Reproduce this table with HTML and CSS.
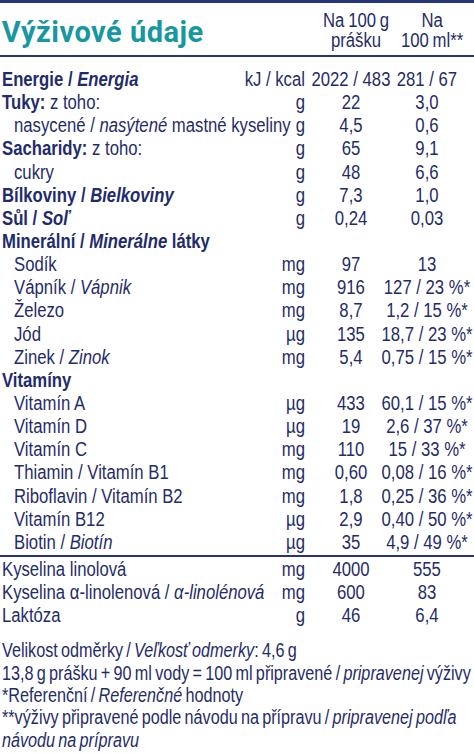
FILE: index.html
```html
<!DOCTYPE html>
<html lang="cs">
<head>
<meta charset="utf-8">
<title>Výživové údaje</title>
<link rel="stylesheet" href="styles.css">
</head>
<body>
<div class="page">
<div class="label">
  <header class="head">
    <h1 class="title">Výživové údaje</h1>
    <div class="hcol">Na 100 g<br>prášku</div>
    <div class="hcol">Na<br>100 ml**</div>
  </header>

  <section class="rows main">
    <div class="l b"><span>Energie / <i>Energia</i></span></div><div class="u"><span>kJ / kcal</span></div><div class="v"><span>2022 / 483</span></div><div class="v"><span>281 / 67</span></div>
    <div class="l"><span><b>Tuky:</b> z toho:</span></div><div class="u"><span>g</span></div><div class="v"><span>22</span></div><div class="v"><span>3,0</span></div>
    <div class="l in"><span>nasycené / <i>nasýtené</i> mastné kyseliny</span></div><div class="u"><span>g</span></div><div class="v"><span>4,5</span></div><div class="v"><span>0,6</span></div>
    <div class="l"><span><b>Sacharidy:</b> z toho:</span></div><div class="u"><span>g</span></div><div class="v"><span>65</span></div><div class="v"><span>9,1</span></div>
    <div class="l in"><span>cukry</span></div><div class="u"><span>g</span></div><div class="v"><span>48</span></div><div class="v"><span>6,6</span></div>
    <div class="l b"><span>Bílkoviny / <i>Bielkoviny</i></span></div><div class="u"><span>g</span></div><div class="v"><span>7,3</span></div><div class="v"><span>1,0</span></div>
    <div class="l b"><span>Sůl / <i>Soľ</i></span></div><div class="u"><span>g</span></div><div class="v"><span>0,24</span></div><div class="v"><span>0,03</span></div>
    <div class="l b full"><span>Minerální / <i>Minerálne</i> látky</span></div>
    <div class="l in"><span>Sodík</span></div><div class="u"><span>mg</span></div><div class="v"><span>97</span></div><div class="v"><span>13</span></div>
    <div class="l in"><span>Vápník / <i>Vápnik</i></span></div><div class="u"><span>mg</span></div><div class="v"><span>916</span></div><div class="v"><span>127 / 23 %*</span></div>
    <div class="l in"><span>Železo</span></div><div class="u"><span>mg</span></div><div class="v"><span>8,7</span></div><div class="v"><span>1,2 / 15 %*</span></div>
    <div class="l in"><span>Jód</span></div><div class="u"><span>µg</span></div><div class="v"><span>135</span></div><div class="v"><span>18,7 / 23 %*</span></div>
    <div class="l in"><span>Zinek / <i>Zinok</i></span></div><div class="u"><span>mg</span></div><div class="v"><span>5,4</span></div><div class="v"><span>0,75 / 15 %*</span></div>
    <div class="l b full"><span>Vitamíny</span></div>
    <div class="l in"><span>Vitamín A</span></div><div class="u"><span>µg</span></div><div class="v"><span>433</span></div><div class="v"><span>60,1 / 15 %*</span></div>
    <div class="l in"><span>Vitamín D</span></div><div class="u"><span>µg</span></div><div class="v"><span>19</span></div><div class="v"><span>2,6 / 37 %*</span></div>
    <div class="l in"><span>Vitamín C</span></div><div class="u"><span>mg</span></div><div class="v"><span>110</span></div><div class="v"><span>15 / 33 %*</span></div>
    <div class="l in"><span>Thiamin / Vitamín B1</span></div><div class="u"><span>mg</span></div><div class="v"><span>0,60</span></div><div class="v"><span>0,08 / 16 %*</span></div>
    <div class="l in"><span>Riboflavin / Vitamín B2</span></div><div class="u"><span>mg</span></div><div class="v"><span>1,8</span></div><div class="v"><span>0,25 / 36 %*</span></div>
    <div class="l in"><span>Vitamín B12</span></div><div class="u"><span>µg</span></div><div class="v"><span>2,9</span></div><div class="v"><span>0,40 / 50 %*</span></div>
    <div class="l in"><span>Biotin / <i>Biotín</i></span></div><div class="u"><span>µg</span></div><div class="v"><span>35</span></div><div class="v"><span>4,9 / 49 %*</span></div>
  </section>

  <section class="rows extra">
    <div class="l"><span>Kyselina linolová</span></div><div class="u"><span>mg</span></div><div class="v"><span>4000</span></div><div class="v"><span>555</span></div>
    <div class="l"><span>Kyselina α-linolenová / <i>α-linolénová</i></span></div><div class="u"><span>mg</span></div><div class="v"><span>600</span></div><div class="v"><span>83</span></div>
    <div class="l"><span>Laktóza</span></div><div class="u"><span>g</span></div><div class="v"><span>46</span></div><div class="v"><span>6,4</span></div>
  </section>

  <footer class="notes">
    <p>Velikost odměrky / <i>Veľkosť odmerky</i>: 4,6 g</p>
    <p>13,8 g prášku + 90 ml vody = 100 ml připravené / <i>pripravenej</i> výživy</p>
    <p>*Referenční / <i>Referenčné</i> hodnoty</p>
    <p>**výživy připravené podle návodu na přípravu / <i>pripravenej podľa</i></p>
    <p><i>návodu na prípravu</i></p>
  </footer>
</div>
</div>
</body>
</html>
```

FILE: styles.css
```css
html, body {
  margin: 0;
  padding: 0;
  background: #ffffff;
}

body {
  font-family: "Liberation Sans", Arial, sans-serif;
  font-size: 20px;
  color: #1f2c6c;
}

.page {
  width: 474px;
  overflow: hidden;
}

/* The label is set in a condensed face: the sheet is laid out
   at 567.7px and narrowed to the 474px window. */
.label {
  width: 567.7px;
  border-top: 3px solid #26357a;
  transform: scaleX(0.835);
  transform-origin: 0 0;
}

.head {
  display: grid;
  grid-template-columns: minmax(0, 1fr) 110.2px 71.9px;
  padding: 0 14.3px 0 2.4px;
  height: 52px;
  border-bottom: 2px solid #26357a;
  align-items: start;
}

.title {
  margin: 0;
  padding-top: 12px;
  font-family: Roboto, "DejaVu Sans", sans-serif;
  font-weight: 700;
  font-size: 29px;
  letter-spacing: 0.5px;
  line-height: 34px;
  color: #1797a0;
  white-space: nowrap;
  transform: scaleX(1.1976);
  transform-origin: 0 0;
}

.hcol {
  display: flex;
  flex-direction: column;
  align-items: center;
  text-align: center;
  line-height: 20px;
  padding-top: 7px;
  white-space: nowrap;
  word-spacing: -1px;
}

.rows {
  display: grid;
  grid-template-columns: minmax(0, 1fr) 47.9px 110.2px 71.9px;
  grid-auto-rows: 23.15px;
  padding: 0 20.4px 0 2.4px;
  line-height: 23.15px;
}

.main {
  padding-top: 11px;
  padding-bottom: 1px;
  border-bottom: 2px solid #26357a;
}

.extra {
  padding-top: 1px;
}

.l, .u, .v {
  display: flex;
  white-space: nowrap;
  min-width: 0;
}

.l {
  justify-content: flex-start;
}

.in {
  padding-left: 14.4px;
}

.b {
  font-weight: 700;
}

.full {
  grid-column: 1 / -1;
}

.u {
  justify-content: flex-end;
}

.v {
  justify-content: center;
}

.notes {
  padding: 12px 2px 0 2.4px;
  font-size: 19.4px;
  line-height: 22.3px;
  word-spacing: -1.5px;
  white-space: nowrap;
}

.notes p {
  margin: 0;
}
```
